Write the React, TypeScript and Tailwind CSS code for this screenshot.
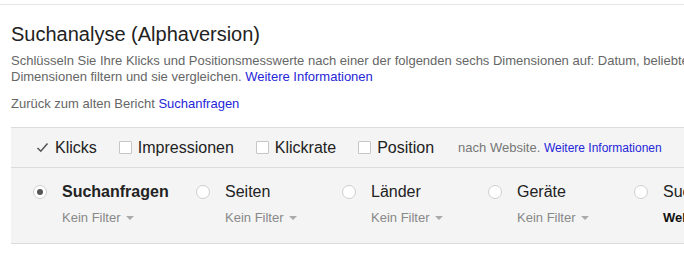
import React from 'react';

const metrics = [
  { label: 'Klicks', checked: true },
  { label: 'Impressionen', checked: false },
  { label: 'Klickrate', checked: false },
  { label: 'Position', checked: false },
];

const dimensions = [
  { label: 'Suchanfragen', filter: 'Kein Filter', selected: true, width: 'w-[163px]' },
  { label: 'Seiten', filter: 'Kein Filter', selected: false, width: 'w-[146px]' },
  { label: 'Länder', filter: 'Kein Filter', selected: false, width: 'w-[146px]' },
  { label: 'Geräte', filter: 'Kein Filter', selected: false, width: 'w-[146px]' },
  { label: 'Suchdarstellung', filter: 'Websuche', selected: false, width: 'w-[146px]', bold: true },
];

function Check({ checked }: { checked: boolean }) {
  if (checked) {
    return (
      <svg width="13" height="13" viewBox="0 0 13 13" className="shrink-0">
        <polyline points="1.5,7 4.8,10.2 11.5,2.5" fill="none" stroke="#555" strokeWidth="1.6" />
      </svg>
    );
  }
  return <span className="w-[13px] h-[13px] shrink-0 border border-[#c6c6c6] bg-white rounded-[1px]" />;
}

export default function App() {
  return (
    <div className="w-[684px] h-[260px] overflow-hidden bg-white font-['Liberation_Sans',Arial,sans-serif]">
      <div className="mt-1 border-t border-[#e5e5e5] pl-[11px]">
        <h1 className="pt-[17px] text-[20px] leading-6 text-[#222] whitespace-nowrap">Suchanalyse (Alphaversion)</h1>

        <p className="mt-[7px] text-[13px] leading-4 text-[#666] whitespace-nowrap">
          Schlüsseln Sie Ihre Klicks und Positionsmesswerte nach einer der folgenden sechs Dimensionen auf: Datum, beliebte
          <br />
          Dimensionen filtern und sie vergleichen. <span className="text-[#2626d9]">Weitere Informationen</span>
        </p>

        <p className="mt-[11px] text-[13px] leading-4 text-[#666] whitespace-nowrap">
          Zurück zum alten Bericht <span className="text-[#2626d9]">Suchanfragen</span>
        </p>

        {/* Panel */}
        <div className="mt-[15px] bg-[#f4f4f4] border-t border-b border-[#dcdcdc] w-[700px]">
          {/* Metrics toolbar */}
          <div className="h-10 border-b border-[#dcdcdc] flex items-center pl-[25px] whitespace-nowrap">
            {metrics.map((m) => (
              <div key={m.label} className="flex items-center gap-[6px] mr-[22px]">
                <Check checked={m.checked} />
                <span className="text-[16px] text-[#222]">{m.label}</span>
              </div>
            ))}
            <span className="ml-[2px] text-[13px] text-[#777]">
              nach Website. <span className="text-[12px] text-[#2626d9]">Weitere Informationen</span>
            </span>
          </div>

          {/* Dimensions */}
          <div className="flex pl-[22px] pt-[14px] pb-[17px] whitespace-nowrap">
            {dimensions.map((d) => (
              <div key={d.label} className={`${d.width} shrink-0`}>
                <div className="flex items-center h-5">
                  <span className="w-[14px] h-[14px] rounded-full border border-[#cfcfcf] bg-white flex items-center justify-center mr-[15px] shrink-0">
                    {d.selected && <span className="w-[6px] h-[6px] rounded-full bg-[#555]" />}
                  </span>
                  <span className={`text-[16px] text-[#222] ${d.selected ? 'font-bold' : ''}`}>{d.label}</span>
                </div>
                <div className="mt-2 pl-[29px] flex items-center h-4">
                  {d.bold ? (
                    <span className="text-[13px] font-bold text-[#111]">{d.filter}</span>
                  ) : (
                    <>
                      <span className="text-[13px] text-[#888]">{d.filter}</span>
                      <svg width="8" height="4" viewBox="0 0 8 4" className="ml-[5px]">
                        <polygon points="0,0 8,0 4,4" fill="#aaa" />
                      </svg>
                    </>
                  )}
                </div>
              </div>
            ))}
          </div>
        </div>
      </div>
    </div>
  );
}
